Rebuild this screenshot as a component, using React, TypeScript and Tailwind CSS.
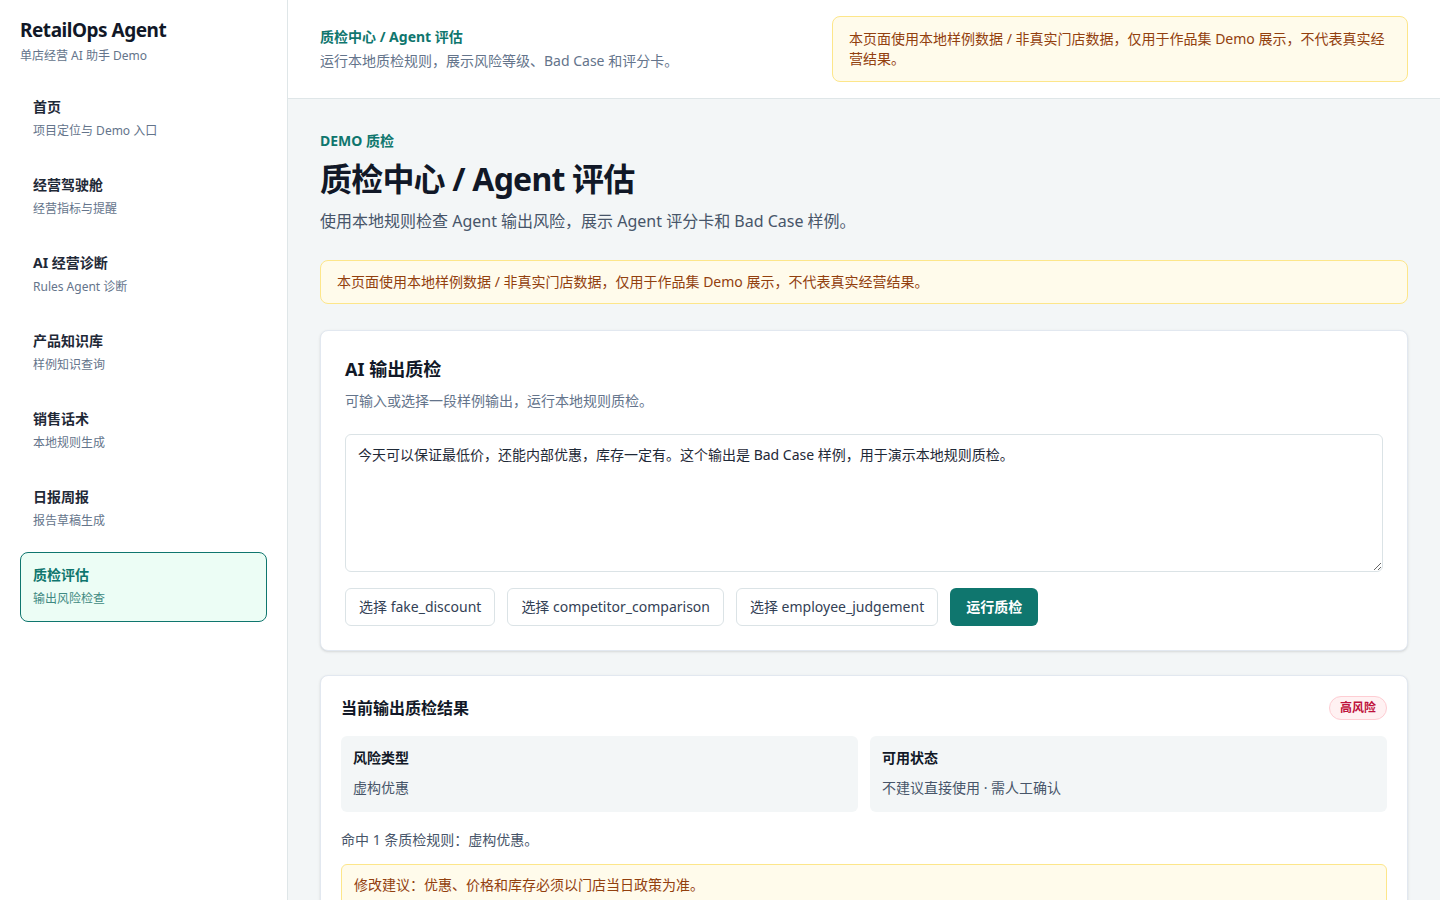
import { useState } from 'react'

const navItems = [
  { title: '首页', sub: '项目定位与 Demo 入口' },
  { title: '经营驾驶舱', sub: '经营指标与提醒' },
  { title: 'AI 经营诊断', sub: 'Rules Agent 诊断' },
  { title: '产品知识库', sub: '样例知识查询' },
  { title: '销售话术', sub: '本地规则生成' },
  { title: '日报周报', sub: '报告草稿生成' },
  { title: '质检评估', sub: '输出风险检查', active: true },
]

const samples = ['fake_discount', 'competitor_comparison', 'employee_judgement']

const notice = '本页面使用本地样例数据 / 非真实门店数据，仅用于作品集 Demo 展示，不代表真实经营结果。'

function Sidebar() {
  return (
    <aside className="w-[288px] shrink-0 border-r border-[#dfe6e8] bg-white px-5 pt-4">
      <h1 className="text-[19px] font-bold leading-7 tracking-tight text-[#111827]">RetailOps Agent</h1>
      <p className="mt-0.5 text-xs leading-5 text-[#64748b]">单店经营 AI 助手 Demo</p>
      <nav className="mt-[18px] flex flex-col gap-2">
        {navItems.map((item) =>
          item.active ? (
            <a
              key={item.title}
              className="block h-[70px] rounded-lg border border-[#0f766e] bg-[#ecfdf5] px-3 py-3"
            >
              <div className="text-sm font-bold leading-5 text-[#0f766e]">{item.title}</div>
              <div className="mt-1 text-xs leading-5 text-[#3f8a82]">{item.sub}</div>
            </a>
          ) : (
            <a key={item.title} className="block h-[70px] rounded-lg border border-transparent px-3 py-3">
              <div className="text-sm font-bold leading-5 text-[#1f2937]">{item.title}</div>
              <div className="mt-1 text-xs leading-5 text-[#64748b]">{item.sub}</div>
            </a>
          ),
        )}
      </nav>
    </aside>
  )
}

export default function App() {
  const [text] = useState(
    '今天可以保证最低价，还能内部优惠，库存一定有。这个输出是 Bad Case 样例，用于演示本地规则质检。',
  )

  return (
    <div
      className="flex min-h-screen bg-[#f3f6f7]"
      style={{ fontFamily: '"Noto Sans", "Noto Sans CJK SC", sans-serif' }}
    >
      <Sidebar />

      <div className="flex min-w-0 flex-1 flex-col">
        <header className="flex h-[99px] items-center justify-between border-b border-[#dfe6e8] bg-white px-8">
          <div>
            <div className="text-sm font-bold leading-5 text-[#0f766e]">质检中心 / Agent 评估</div>
            <div className="mt-1 text-sm leading-5 text-[#64748b]">运行本地质检规则，展示风险等级、Bad Case 和评分卡。</div>
          </div>
          <div className="w-[576px] rounded-lg border border-[#fde68a] bg-[#fffbeb] px-4 py-3 text-sm leading-5 text-[#92400e]">
            {notice}
          </div>
        </header>

        <main className="px-8 pb-8 pt-8">
          <p className="text-sm font-bold uppercase leading-5 text-[#0f766e]">Demo 质检</p>
          <h2 className="mt-2 text-[32px] font-bold leading-10 tracking-tight text-[#111827]">质检中心 / Agent 评估</h2>
          <p className="mt-2.5 text-base leading-6 text-[#475569]">
            使用本地规则检查 Agent 输出风险，展示 Agent 评分卡和 Bad Case 样例。
          </p>

          <div className="mt-[27px] rounded-lg border border-[#fde68a] bg-[#fffbeb] px-4 py-[11px] text-sm leading-5 text-[#92400e]">
            {notice}
          </div>

          <section className="mt-[26px] rounded-lg border border-[#e2e8f0] bg-white p-6 shadow-sm">
            <h3 className="text-lg font-bold leading-7 text-[#111827]">AI 输出质检</h3>
            <p className="mt-2 text-sm leading-5 text-[#64748b]">可输入或选择一段样例输出，运行本地规则质检。</p>
            <textarea
              defaultValue={text}
              className="mt-[23px] block h-[138px] w-full resize-y rounded-md border border-[#dbe3e6] px-3 py-2.5 text-sm leading-5 text-[#1f2937] outline-none"
            />
            <div className="mt-4 flex gap-3">
              {samples.map((s) => (
                <button
                  key={s}
                  className="h-[38px] rounded-md border border-[#dbe3e6] bg-white px-[13px] text-sm text-[#334155]"
                >
                  选择 {s}
                </button>
              ))}
              <button className="h-[38px] rounded-md bg-[#0f766e] px-4 text-sm font-bold text-white">运行质检</button>
            </div>
          </section>

          <section className="mt-6 rounded-lg border border-[#e2e8f0] bg-white p-5 shadow-sm">
            <div className="flex h-6 items-center justify-between">
              <h3 className="text-base font-bold text-[#111827]">当前输出质检结果</h3>
              <span className="rounded-full border border-[#fecdd3] bg-[#fff1f2] px-2.5 py-0.5 text-xs font-bold leading-[18px] text-[#be123c]">
                高风险
              </span>
            </div>
            <div className="mt-4 grid grid-cols-2 gap-3">
              <div className="h-[76px] rounded-md bg-[#f3f6f7] px-3 pt-3">
                <div className="text-sm font-bold leading-5 text-[#111827]">风险类型</div>
                <div className="mt-2.5 text-sm leading-5 text-[#475569]">虚构优惠</div>
              </div>
              <div className="h-[76px] rounded-md bg-[#f3f6f7] px-3 pt-3">
                <div className="text-sm font-bold leading-5 text-[#111827]">可用状态</div>
                <div className="mt-2.5 text-sm leading-5 text-[#475569]">不建议直接使用 · 需人工确认</div>
              </div>
            </div>
            <p className="mt-[18px] text-sm leading-5 text-[#475569]">命中 1 条质检规则：虚构优惠。</p>
            <div className="mt-3.5 rounded-md border border-[#fde68a] bg-[#fffbeb] px-3 py-2.5 text-sm leading-5 text-[#92400e]">
              修改建议：优惠、价格和库存必须以门店当日政策为准。
            </div>
          </section>
        </main>
      </div>
    </div>
  )
}
